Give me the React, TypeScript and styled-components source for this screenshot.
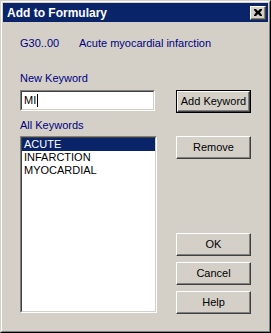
import React from "react";
import styled, { createGlobalStyle } from "styled-components";

const FACE = "#d4d0c8";
const NAVY = "#0a246a";
const LABEL = "#000080";

const Global = createGlobalStyle`
  html, body { margin: 0; padding: 0; background: ${FACE}; }
  * { box-sizing: border-box; }
  body { font-family: "Liberation Sans", Arial, sans-serif; font-size: 11px; }
`;

const Window = styled.div`
  width: 271px;
  height: 333px;
  border-style: solid;
  border-width: 1px;
  border-color: ${FACE} #000000 #000000 ${FACE};
  background: ${FACE};
`;

const Frame = styled.div`
  height: 100%;
  border-style: solid;
  border-width: 1px;
  border-color: #ffffff #808080 #808080 #ffffff;
  padding: 1px;
  display: flex;
  flex-direction: column;
`;

const TitleBar = styled.div`
  height: 19px;
  flex: none;
  background: ${NAVY};
  display: flex;
  align-items: center;
  padding: 0 2px 0 4px;
`;

const TitleText = styled.div`
  flex: 1;
  color: #ffffff;
  font-weight: bold;
  font-size: 12px;
  line-height: 14px;
  white-space: nowrap;
`;

const CloseButton = styled.div`
  width: 16px;
  height: 14px;
  background: ${FACE};
  border-style: solid;
  border-width: 1px;
  border-color: #ffffff #404040 #404040 #ffffff;
  box-shadow: inset -1px -1px 0 #808080;
  display: flex;
  align-items: center;
  justify-content: center;
  padding: 0 1px 1px 0;
`;

const Body = styled.div`
  padding: 15px 0 0 17px;
`;

const InfoRow = styled.div`
  display: flex;
  height: 13px;
  line-height: 13px;
  color: ${LABEL};
  white-space: nowrap;
`;

const Code = styled.span`
  width: 59px;
  flex: none;
`;

const FormGrid = styled.div`
  display: grid;
  grid-template-columns: 137px 75px;
  column-gap: 19px;
  margin-top: 22px;
  align-items: start;
`;

const Label = styled.div<{ $top: number; $bottom: number }>`
  grid-column: 1 / 3;
  line-height: 13px;
  height: 13px;
  color: ${LABEL};
  margin-top: ${(p) => p.$top}px;
  margin-bottom: ${(p) => p.$bottom}px;
`;

const sunken = `
  border-style: solid;
  border-width: 1px;
  border-color: #808080 #ffffff #ffffff #808080;
  background: #ffffff;
`;

const TextInput = styled.div`
  ${sunken}
  width: 135px;
  height: 21px;
`;

const InnerSunken = styled.div`
  height: 100%;
  border-style: solid;
  border-width: 1px;
  border-color: #404040 ${FACE} ${FACE} #404040;
  display: flex;
  align-items: center;
  padding-left: 2px;
  color: #000000;
  line-height: 13px;
`;

const Caret = styled.span`
  display: inline-block;
  width: 1px;
  height: 13px;
  background: #000000;
  margin-left: 1px;
`;

const ListBox = styled.div`
  ${sunken}
  width: 137px;
  height: 177px;
`;

const ListInner = styled.div`
  height: 100%;
  border-style: solid;
  border-width: 1px;
  border-color: #404040 ${FACE} ${FACE} #404040;
`;

const ListItem = styled.div<{ $selected?: boolean }>`
  height: 13px;
  line-height: 13px;
  padding-left: 2px;
  color: ${(p) => (p.$selected ? "#ffffff" : "#000000")};
  background: ${(p) => (p.$selected ? NAVY : "transparent")};
  white-space: nowrap;
`;

const Button = styled.div<{ $default?: boolean; $top?: number }>`
  width: 75px;
  height: 23px;
  margin-top: ${(p) => p.$top ?? 0}px;
  border: 1px solid ${(p) => (p.$default ? "#000000" : "transparent")};
  background: ${FACE};
  display: flex;
`;

const ButtonFace = styled.div`
  flex: 1;
  border-style: solid;
  border-width: 1px;
  border-color: #ffffff #404040 #404040 #ffffff;
  box-shadow: inset -1px -1px 0 #808080;
  display: flex;
  align-items: center;
  justify-content: center;
  color: #000000;
  line-height: 13px;
  padding-bottom: 1px;
  white-space: nowrap;
`;

const PlainButton = styled(Button)`
  border: none;
`;

const ButtonColumn = styled.div`
  display: flex;
  flex-direction: column;
`;

function DialogButton({ label, isDefault, top }: { label: string; isDefault?: boolean; top?: number }) {
  if (isDefault) {
    return (
      <Button $default $top={top}>
        <ButtonFace>{label}</ButtonFace>
      </Button>
    );
  }
  return (
    <PlainButton $top={top}>
      <ButtonFace>{label}</ButtonFace>
    </PlainButton>
  );
}

export default function App() {
  return (
    <>
      <Global />
      <Window>
        <Frame>
          <TitleBar>
            <TitleText>Add to Formulary</TitleText>
            <CloseButton>
              <svg width="8" height="7" viewBox="0 0 8 7">
                <path d="M0 0h2l2 2 2-2h2v1L6 3.5 8 6v1H6L4 5 2 7H0V6l2-2.5L0 1z" fill="#000" />
              </svg>
            </CloseButton>
          </TitleBar>
          <Body>
            <InfoRow>
              <Code>G30..00</Code>
              <span>Acute myocardial infarction</span>
            </InfoRow>
            <FormGrid>
              <Label $top={0} $bottom={5}>New Keyword</Label>
              <TextInput>
                <InnerSunken>
                  MI<Caret />
                </InnerSunken>
              </TextInput>
              <DialogButton label="Add Keyword" isDefault />
              <Label $top={6} $bottom={4}>All Keywords</Label>
              <ListBox>
                <ListInner>
                  <ListItem $selected>ACUTE</ListItem>
                  <ListItem>INFARCTION</ListItem>
                  <ListItem>MYOCARDIAL</ListItem>
                </ListInner>
              </ListBox>
              <ButtonColumn>
                <DialogButton label="Remove" />
                <DialogButton label="OK" top={74} />
                <DialogButton label="Cancel" top={6} />
                <DialogButton label="Help" top={6} />
              </ButtonColumn>
            </FormGrid>
          </Body>
        </Frame>
      </Window>
    </>
  );
}
